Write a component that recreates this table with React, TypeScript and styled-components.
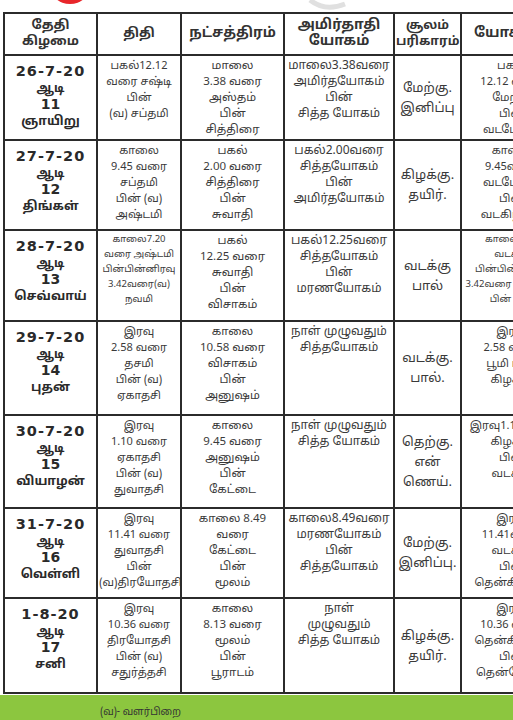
import React from "react";
import styled, { createGlobalStyle } from "styled-components";

const Global = createGlobalStyle`
  html, body { margin: 0; padding: 0; background: #ffffff; }
  body { font-family: "Noto Sans Tamil", "Lohit Tamil", "Noto Sans", "DejaVu Sans", sans-serif; color: #2a2a2a; }
`;

const Page = styled.div`
  width: 513px;
  height: 720px;
  overflow: hidden;
  display: flex;
  flex-direction: column;
  background: #fff;
`;

const TopStrip = styled.div`
  height: 12px;
  flex: none;
  display: flex;
`;

const TableWrap = styled.div`
  flex: none;
  overflow: hidden;
  padding-left: 3px;
`;

const Table = styled.table`
  border-collapse: collapse;
  table-layout: fixed;
  width: 558px;
`;

type CellProps = { $align?: "top" | "middle"; $size?: number; $lh?: number };

const HeadCell = styled.th<{ $size?: number }>`
  border: 2px solid #2b2b2b;
  padding: 0 1px;
  font-size: ${(p) => p.$size ?? 13}px;
  line-height: 16px;
  font-weight: 700;
  color: #333;
  text-align: center;
  vertical-align: middle;
  white-space: nowrap;
  overflow: hidden;
`;

const Cell = styled.td<CellProps>`
  border: 2px solid #2b2b2b;
  padding: 2px 1px 0;
  text-align: center;
  vertical-align: ${(p) => p.$align ?? "top"};
  font-size: ${(p) => p.$size ?? 11}px;
  line-height: ${(p) => p.$lh ?? 16}px;
  color: #3a3a3a;
  white-space: nowrap;
  overflow: hidden;
`;

const DateCell = styled.td`
  border: 2px solid #2b2b2b;
  padding: 5px 2px 0;
  text-align: center;
  vertical-align: top;
  color: #2a2a2a;
  font-weight: 700;
`;

const DateNum = styled.div`
  font-family: "DejaVu Sans", "Liberation Sans", sans-serif;
  font-weight: 700;
  font-size: 14.5px;
  letter-spacing: 1px;
  line-height: 20px;
`;

const Month = styled.div`
  font-size: 12px;
  line-height: 16px;
  font-weight: 700;
`;

const DayNum = styled.div`
  font-family: "DejaVu Sans", "Liberation Sans", sans-serif;
  font-size: 14px;
  line-height: 15px;
  font-weight: 700;
`;

const DayName = styled.div`
  font-size: 12.5px;
  line-height: 20px;
  font-weight: 700;
`;

const Line = styled.div``;

const Footer = styled.div`
  flex: 1;
  background: #8cc63f;
  margin-top: 1px;
  padding: 12px 0 0 100px;
  font-size: 10px;
  line-height: 12px;
  color: #333;
`;

const Row = styled.tr<{ $h: number }>`
  height: ${(p) => p.$h}px;
`;

type RowData = {
  h: number;
  date: string;
  day: string;
  name: string;
  thithi: string[];
  small?: boolean;
  nat: string[];
  amirtha: string[];
  soolam: string[];
  yogini: string[];
};

const rows: RowData[] = [
  {
    h: 85,
    date: "26-7-20",
    day: "11",
    name: "ஞாயிறு",
    thithi: ["பகல்12.12", "வரை சஷ்டி", "பின்", "(வ) சப்தமி"],
    nat: ["மாலை", "3.38 வரை", "அஸ்தம்", "பின்", "சித்திரை"],
    amirtha: ["மாலை3.38வரை", "அமிர்தயோகம்", "பின்", "சித்த யோகம்"],
    soolam: ["மேற்கு.", "இனிப்பு"],
    yogini: ["பகல்", "12.12 வரை", "மேற்கு", "பின்", "வடமேற்கு"],
  },
  {
    h: 90,
    date: "27-7-20",
    day: "12",
    name: "திங்கள்",
    thithi: ["காலை", "9.45 வரை", "சப்தமி", "பின் (வ)", "அஷ்டமி"],
    nat: ["பகல்", "2.00 வரை", "சித்திரை", "பின்", "சுவாதி"],
    amirtha: ["பகல்2.00வரை", "சித்தயோகம்", "பின்", "அமிர்தயோகம்"],
    soolam: ["கிழக்கு.", "தயிர்."],
    yogini: ["காலை", "9.45வரை", "வடமேற்கு", "பின்", "வடகிழக்கு"],
  },
  {
    h: 91,
    date: "28-7-20",
    day: "13",
    name: "செவ்வாய்",
    thithi: ["காலை7.20", "வரை அஷ்டமி", "பின்பின்னிரவு", "3.42வரை(வ)", "நவமி"],
    small: true,
    nat: ["பகல்", "12.25 வரை", "சுவாதி", "பின்", "விசாகம்"],
    amirtha: ["பகல்12.25வரை", "சித்தயோகம்", "பின்", "மரணயோகம்"],
    soolam: ["வடக்கு", "பால்"],
    yogini: ["காலை7.20", "வடக்கு", "பின்பின்னிரவு", "3.42வரை ஆகாயம்", "பின் பூமி"],
  },
  {
    h: 94,
    date: "29-7-20",
    day: "14",
    name: "புதன்",
    thithi: ["இரவு", "2.58 வரை", "தசமி", "பின் (வ)", "ஏகாதசி"],
    nat: ["காலை", "10.58 வரை", "விசாகம்", "பின்", "அனுஷம்"],
    amirtha: ["நாள் முழுவதும்", "சித்தயோகம்"],
    soolam: ["வடக்கு.", "பால்."],
    yogini: ["இரவு", "2.58 வரை", "பூமி பின்", "கிழக்கு"],
  },
  {
    h: 93,
    date: "30-7-20",
    day: "15",
    name: "வியாழன்",
    thithi: ["இரவு", "1.10 வரை", "ஏகாதசி", "பின் (வ)", "துவாதசி"],
    nat: ["காலை", "9.45 வரை", "அனுஷம்", "பின்", "கேட்டை"],
    amirtha: ["நாள் முழுவதும்", "சித்த யோகம்"],
    soolam: ["தெற்கு.", "என்", "ணெய்."],
    yogini: ["இரவு1.10வரை", "கிழக்கு", "பின்", "வடக்கு"],
  },
  {
    h: 90,
    date: "31-7-20",
    day: "16",
    name: "வெள்ளி",
    thithi: ["இரவு", "11.41 வரை", "துவாதசி", "பின்", "(வ)திரயோதசி"],
    nat: ["காலை 8.49", "வரை", "கேட்டை", "பின்", "மூலம்"],
    amirtha: ["காலை8.49வரை", "மரணயோகம்", "பின்", "சித்தயோகம்"],
    soolam: ["மேற்கு.", "இனிப்பு."],
    yogini: ["இரவு", "11.41வரை", "வடக்கு", "பின்", "தென்கிழக்கு"],
  },
  {
    h: 95,
    date: "1-8-20",
    day: "17",
    name: "சனி",
    thithi: ["இரவு", "10.36 வரை", "திரயோதசி", "பின் (வ)", "சதுர்த்தசி"],
    nat: ["காலை", "8.13 வரை", "மூலம்", "பின்", "பூராடம்"],
    amirtha: ["நாள்", "முழுவதும்", "சித்த யோகம்"],
    soolam: ["கிழக்கு.", "தயிர்."],
    yogini: ["இரவு", "10.36 வரை", "தென்கிழக்கு", "பின்", "தென்மேற்கு"],
  },
];

const Lines = ({ items }: { items: string[] }) => (
  <>
    {items.map((t, i) => (
      <Line key={i}>{t}</Line>
    ))}
  </>
);

export default function App() {
  return (
    <>
      <Global />
      <Page>
        <TopStrip>
          <svg width="513" height="12" viewBox="0 0 513 12">
            <ellipse cx="70" cy="-14" rx="20" ry="18" fill="#e8262a" />
            <path d="M310 0 Q325 12 345 4" stroke="#e0e0e0" strokeWidth="5" fill="none" />
          </svg>
        </TopStrip>
        <TableWrap>
          <Table>
            <colgroup>
              <col style={{ width: 93 }} />
              <col style={{ width: 84 }} />
              <col style={{ width: 103 }} />
              <col style={{ width: 110 }} />
              <col style={{ width: 67 }} />
              <col style={{ width: 101 }} />
            </colgroup>
            <thead>
              <Row $h={42}>
                <HeadCell>
                  <Line>தேதி</Line>
                  <Line>கிழமை</Line>
                </HeadCell>
                <HeadCell>திதி</HeadCell>
                <HeadCell $size={14}>நட்சத்திரம்</HeadCell>
                <HeadCell $size={14}>
                  <Line>அமிர்தாதி</Line>
                  <Line>யோகம்</Line>
                </HeadCell>
                <HeadCell $size={12.5}>
                  <Line>சூலம்</Line>
                  <Line>பரிகாரம்</Line>
                </HeadCell>
                <HeadCell $size={14}>யோகினி</HeadCell>
              </Row>
            </thead>
            <tbody>
              {rows.map((r) => (
                <Row key={r.date} $h={r.h}>
                  <DateCell>
                    <DateNum>{r.date}</DateNum>
                    <Month>ஆடி</Month>
                    <DayNum>{r.day}</DayNum>
                    <DayName>{r.name}</DayName>
                  </DateCell>
                  <Cell $size={r.small ? 9.5 : 11} $lh={r.small ? 15 : 16}>
                    <Lines items={r.thithi} />
                  </Cell>
                  <Cell $size={11.5}>
                    <Lines items={r.nat} />
                  </Cell>
                  <Cell $size={12}>
                    <Lines items={r.amirtha} />
                  </Cell>
                  <Cell $align="middle" $size={13} $lh={20}>
                    <Lines items={r.soolam} />
                  </Cell>
                  <Cell $size={r.small ? 9.5 : 11} $lh={r.small ? 15 : 16}>
                    <Lines items={r.yogini} />
                  </Cell>
                </Row>
              ))}
            </tbody>
          </Table>
        </TableWrap>
        <Footer>(வ)- வளர்பிறை</Footer>
      </Page>
    </>
  );
}
